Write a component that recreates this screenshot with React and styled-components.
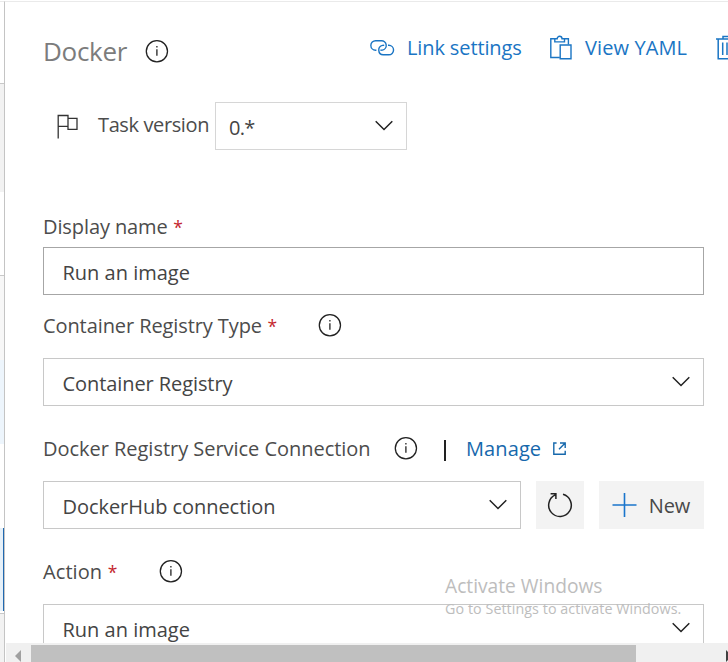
import React from "react";
import styled, { createGlobalStyle } from "styled-components";

const GlobalStyle = createGlobalStyle`
  * { box-sizing: border-box; }
  body { margin: 0; background: #fff; overflow: hidden; }
`;

const Page = styled.div`
  position: relative;
  display: flex;
  width: 728px;
  height: 662px;
  overflow: hidden;
  border-top: 1px solid #fff;
  font-family: "Open Sans", "Noto Sans", sans-serif;
  font-size: 20px;
  line-height: 28px;
  color: #4c4c4c;
  background: #fff;
  white-space: nowrap;
`;

const TaskStrip = styled.div`
  flex: none;
  width: 4px;
  display: flex;
  flex-direction: column;
  border-top: 1px solid #eaeaea;
`;

const StripItem = styled.div`
  flex: none;
  height: ${(p) => p.$h}px;
  background: ${(p) => p.$bg || "#fff"};
  border-top: ${(p) => (p.$line ? "1px solid #c8c8c8" : "none")};
  border-right: ${(p) => (p.$active ? "1px solid #1f68b0" : "none")};
`;

const Panel = styled.main`
  flex: none;
  width: 724px;
  display: flex;
  flex-direction: column;
  border-left: 1px solid #c4c4c4;
  border-top: 1px solid #eaeaea;
`;

const Form = styled.div`
  flex: none;
  height: 641px;
  padding: 24px 0 0 38px;
  overflow: hidden;
`;

const Header = styled.header`
  display: flex;
  align-items: flex-start;
  height: 50px;
`;

const TitleGroup = styled.div`
  display: flex;
  align-items: center;
  width: 327px;
  height: 50px;
  flex: none;
`;

const Text = styled.span`
  letter-spacing: ${(p) => p.$track || 0}px;
`;

const Title = styled.h1`
  margin: 0;
  width: 102px;
  padding-bottom: 1px;
  font-size: 26px;
  font-weight: 400;
  letter-spacing: -0.3px;
  color: #7c7c7c;
`;

const Toolbar = styled.nav`
  display: flex;
  align-items: center;
  height: 43px;
`;

const ToolButton = styled.div`
  flex: none;
  display: flex;
  align-items: center;
  width: ${(p) => p.$w}px;
  gap: ${(p) => p.$gap}px;
  color: #1a75c4;
`;

const VersionRow = styled.div`
  display: flex;
  align-items: center;
  height: 48px;
  margin-top: 26px;
  padding-left: 13px;
`;

const VersionLabel = styled.div`
  width: 117px;
  margin-left: 21px;
  padding-bottom: 3px;
`;

const Label = styled.div`
  display: flex;
  align-items: center;
  height: 42px;
  margin-top: ${(p) => p.$before}px;
  margin-bottom: ${(p) => p.$after}px;
`;

const LabelText = styled.div`
  width: ${(p) => p.$w}px;
  flex: none;
  padding-top: 2px;
`;

const Required = styled.span`
  margin-left: 5.5px;
  font-size: 17.5px;
  color: #c4262e;
`;

const Field = styled.div`
  flex: none;
  display: flex;
  align-items: center;
  justify-content: space-between;
  width: ${(p) => p.$w}px;
  height: 48px;
  padding: ${(p) => (p.$compact ? "0 13.5px 0 13px" : "0 13px 0 18.5px")};
  border: 1px solid ${(p) => p.$border || "#c8c8c8"};
  color: #444;

  > span { padding-top: 3px; }
`;

const FieldRow = styled.div`
  display: flex;
  gap: 15px;
`;

const Button = styled.div`
  flex: none;
  display: flex;
  align-items: center;
  justify-content: center;
  gap: 12px;
  width: ${(p) => p.$w}px;
  height: 48px;
  background: #f3f3f3;
  color: #484848;

  > span { padding-top: 2px; }
`;

const Separator = styled.div`
  width: 2px;
  height: 21px;
  margin: 5px 20px 0 26px;
  background: #222;
`;

const Manage = styled.a`
  display: flex;
  align-items: center;
  gap: 12px;
  color: #1668ac;

  > span { padding-top: 2px; }
`;

const Scrollbar = styled.div`
  flex: none;
  display: flex;
  align-items: flex-start;
  height: 19px;
  margin-left: 1px;
  padding-top: 2px;
  background: #f0f0f0;
`;

const ScrollArrow = styled.div`
  width: ${(p) => p.$w}px;
  height: 17px;
  padding: ${(p) => p.$pad};
  flex: none;
`;

const Thumb = styled.div`
  flex: none;
  width: 605px;
  height: 17px;
  background: #c0c0c0;
`;

const Watermark = styled.div`
  position: absolute;
  left: 445px;
  top: 571px;
  color: #bdbdbd;
  font-size: 19.2px;
  line-height: 28px;
`;

const WatermarkNote = styled.div`
  font-size: 14.3px;
  line-height: 18px;
`;

const Svg = styled.svg`
  display: block;
  flex: none;
  overflow: visible;
  fill: none;
  stroke: ${(p) => p.$color || "#222"};
  stroke-width: ${(p) => p.$sw || 1.4};
`;

const Triangle = styled.svg`
  display: block;
  fill: ${(p) => p.$color};
`;

const Info = () => (
  <Svg width="24" height="24" viewBox="0 0 24 24" $sw={1.3}>
    <circle cx="11.9" cy="12.3" r="10.6" />
    <path d="M11.9 10.2v6.6M11.9 7v1.6" />
  </Svg>
);

const Chevron = () => (
  <Svg width="18" height="10" viewBox="0 0 18 10" $sw={1.5}>
    <path d="M.7 .2L9 8.5L17.3 .2" />
  </Svg>
);

const LinkIcon = () => (
  <Svg width="25" height="16" viewBox="0 0 25 16" $color="#1a75c4">
    <path d="M6.4 10.2H5.6A4.75 4.75 0 0 1 5.6 .7H11.2A4.75 4.75 0 0 1 12.4 10.1L10.4 10.3" />
    <path d="M14.2 5.2L12.6 5.4A4.75 4.75 0 0 0 13.2 14.8H18.8A4.75 4.75 0 0 0 18.8 5.3H18" />
  </Svg>
);

const YamlIcon = () => (
  <Svg width="22" height="24" viewBox="0 0 22 24" $color="#1a75c4">
    <path d="M9.8 21.5H.8V2.7H4.8M14.5 2.7H18.4V8.5" />
    <path d="M4.8 5.9V2.7H7.2C7.2 -.5 12 -.5 12 2.7H14.5V5.9Z" />
    <path d="M10.2 9H21V22.7H10.2Z" />
  </Svg>
);

const TrashIcon = () => (
  <Svg width="22" height="24" viewBox="0 0 22 24" $color="#1a75c4" $sw={1.5}>
    <path d="M0 2.9H22M7 2.9V.5H15V2.9M2.2 2.9V22.7H19.8V2.9M6.7 6.5V19M11 6.5V19M15.3 6.5V19" />
  </Svg>
);

const FlagIcon = () => (
  <Svg width="21" height="24" viewBox="0 0 21 24" $color="#333" $sw={1.3}>
    <path d="M2.2 24.5V1.5H12V12.3H2.2M12 4.4H21V15.3H12V12.3" />
  </Svg>
);

const ExternalIcon = () => (
  <Svg width="13" height="13" viewBox="0 0 13 13" $color="#1668ac" $sw={1.4}>
    <path d="M3.6 1H.8V12.2H12.2V8.8M7 1H12.2V6M12.2 1L6 7.2" />
  </Svg>
);

const RefreshIcon = () => (
  <Svg width="26" height="26" viewBox="0 0 26 26" $sw={1.5}>
    <path d="M16 2.3A11.3 11.3 0 1 1 8.3 2.9M3.6 1.7H8.9V6.9" />
  </Svg>
);

const PlusIcon = () => (
  <Svg width="24" height="24" viewBox="0 0 24 24" $color="#1a75cc" $sw={1.6}>
    <path d="M11.5 0V24M-.5 12H23.5" />
  </Svg>
);

export default function App() {
  return (
    <>
      <GlobalStyle />
      <Page>
        <TaskStrip>
          <StripItem $h={81} />
          <StripItem $h={109} $bg="#f2f2f2" $line />
          <StripItem $h={83} />
          <StripItem $h={85} $bg="#f7f7f7" $line />
          <StripItem $h={84} $bg="#edf5fc" />
          <StripItem $h={84} />
          <StripItem $h={83} $bg="#e6f0f8" $active />
          <StripItem $h={2} />
          <StripItem $h={49} $bg="#f2f2f2" $line />
        </TaskStrip>
        <Panel>
          <Form>
            <Header>
              <TitleGroup>
                <Title>Docker</Title>
                <Info />
              </TitleGroup>
              <Toolbar>
                <ToolButton $w={180} $gap={12}>
                  <LinkIcon />
                  <Text $track={-0.12}>Link settings</Text>
                </ToolButton>
                <ToolButton $w={166} $gap={13}>
                  <YamlIcon />
                  <Text $track={0.1}>View YAML</Text>
                </ToolButton>
                <ToolButton $w={22} $gap={0}>
                  <TrashIcon />
                </ToolButton>
              </Toolbar>
            </Header>
            <VersionRow>
              <FlagIcon />
              <VersionLabel>
                <Text $track={-0.38}>Task version</Text>
              </VersionLabel>
              <Field $w={192} $compact $border="#d6d6d6">
                <Text $track={-0.7}>0.*</Text>
                <Chevron />
              </Field>
            </VersionRow>
            <Label $before={55} $after={0}>
              <LabelText $w={200}>
                <Text $track={-0.1}>Display name</Text>
                <Required>*</Required>
              </LabelText>
            </Label>
            <Field $w={661} $border="#a6a6a6">
              <Text>Run an image</Text>
            </Field>
            <Label $before={9} $after={12}>
              <LabelText $w={275}>
                <Text $track={-0.09}>Container Registry Type</Text>
                <Required>*</Required>
              </LabelText>
              <Info />
            </Label>
            <Field $w={661}>
              <Text $track={-0.08}>Container Registry</Text>
              <Chevron />
            </Field>
            <Label $before={21} $after={12}>
              <LabelText $w={351}>
                <Text $track={-0.03}>Docker Registry Service Connection</Text>
              </LabelText>
              <Info />
              <Separator />
              <Manage>
                <Text $track={0.1}>Manage</Text>
                <ExternalIcon />
              </Manage>
            </Label>
            <FieldRow>
              <Field $w={478}>
                <Text $track={-0.05}>DockerHub connection</Text>
                <Chevron />
              </Field>
              <Button $w={48}>
                <RefreshIcon />
              </Button>
              <Button $w={105}>
                <PlusIcon />
                <Text $track={-0.1}>New</Text>
              </Button>
            </FieldRow>
            <Label $before={21} $after={12}>
              <LabelText $w={116}>
                <Text $track={0.08}>Action</Text>
                <Required>*</Required>
              </LabelText>
              <Info />
            </Label>
            <Field $w={661}>
              <Text>Run an image</Text>
              <Chevron />
            </Field>
          </Form>
          <Scrollbar>
            <ScrollArrow $w={25} $pad="5px 0 0 9px">
              <Triangle width="6" height="12" viewBox="0 0 6 12" $color="#a0a0a0">
                <path d="M6 0V12L0 6Z" />
              </Triangle>
            </ScrollArrow>
            <Thumb />
            <ScrollArrow $w={92} $pad="5px 0 0 90px">
              <Triangle width="6" height="12" viewBox="0 0 6 12" $color="#404040">
                <path d="M0 0V12L6 6Z" />
              </Triangle>
            </ScrollArrow>
          </Scrollbar>
        </Panel>
        <Watermark>
          <Text>Activate Windows</Text>
          <WatermarkNote>
            <Text $track={0.06}>Go to Settings to activate Windows.</Text>
          </WatermarkNote>
        </Watermark>
      </Page>
    </>
  );
}
